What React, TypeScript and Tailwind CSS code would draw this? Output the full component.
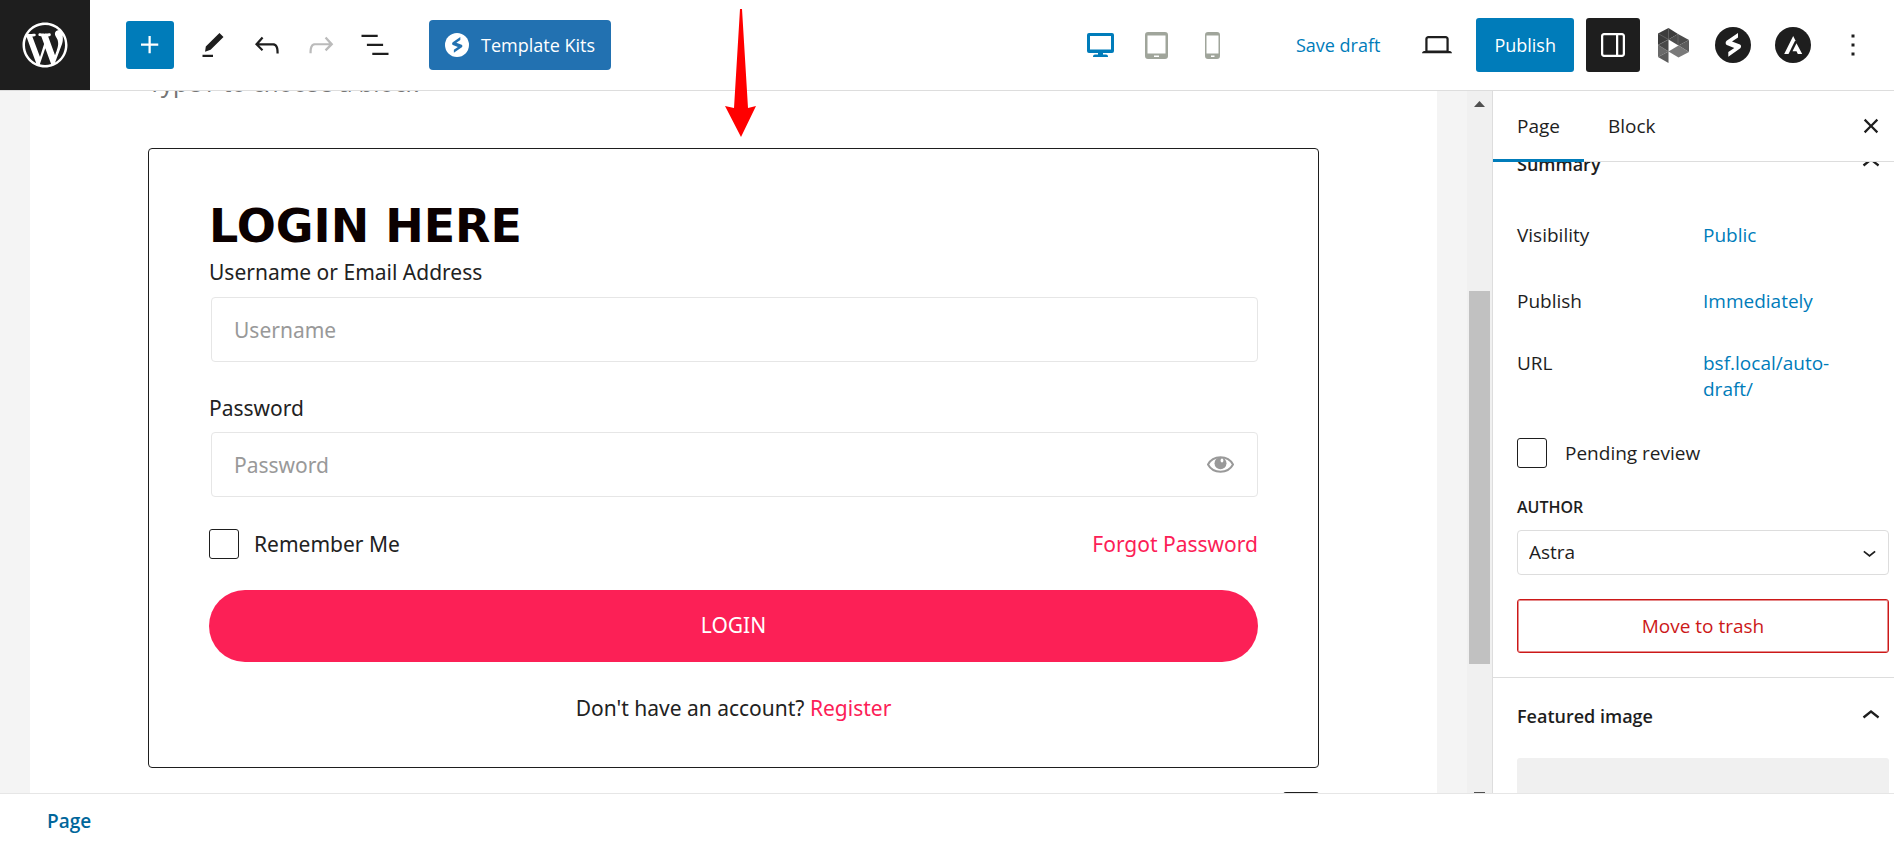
import { useState } from 'react';
import type { ReactNode } from 'react';

interface IconProps {
  d: string;
  className?: string;
}

function Icon({ d, className = 'size-9' }: IconProps) {
  return (
    <svg viewBox="0 0 24 24" fill="currentColor" className={`${className} shrink-0`} aria-hidden="true">
      <path d={d} />
    </svg>
  );
}

const icons = {
  plus: 'M11 12.5V17.5H12.5V12.5H17.5V11H12.5V6H11V11H6V12.5H11Z',
  pencil: 'M16.300 4 19 6.700 10.400 15.200 6.700 16.500 7.200 13zM5 18.500h7V20H5z',
  undo: 'M18.3 11.7c-.6-.6-1.4-.9-2.3-.9H6.7l2.9-3.3-1.1-1-4.5 5L8.5 16l1-1-2.7-2.7H16c.5 0 .9.2 1.3.5 1 1 1 3.4 1 4.5v.3h1.5v-.2c0-1.5 0-4.3-1.5-5.7z',
  redo: 'M15.6 6.5l-1.1 1 2.9 3.3H8c-.9 0-1.7.3-2.3.9-1.4 1.5-1.4 4.2-1.4 5.6v.2h1.5v-.3c0-1.1 0-3.5 1-4.5.3-.3.7-.5 1.3-.5h9.2L14.5 15l1.1 1.1 4.6-4.6-4.6-5z',
  list: 'M13.8 5.2H3v1.5h10.8V5.2zm-3.6 12v1.5H21v-1.5H10.2zm7.2-6H6.6v1.5h10.8v-1.5z',
  laptop: 'M20.5 16h-.7V8c0-1.1-.9-2-2-2H6.2c-1.1 0-2 .9-2 2v8h-.7c-.8 0-1.5.7-1.5 1.5h20c0-.8-.7-1.5-1.5-1.5zM5.7 8c0-.3.2-.5.5-.5h11.6c.3 0 .5.2.5.5v7.6H5.7V8z',
  drawer: 'M18 4H6c-1.1 0-2 .9-2 2v12c0 1.1.9 2 2 2h12c1.1 0 2-.9 2-2V6c0-1.1-.9-2-2-2zm-4 14.5H6c-.3 0-.5-.2-.5-.5V6c0-.3.2-.5.5-.5h8v13zm4.5-.5c0 .3-.2.5-.5.5h-2.5v-13H18c.3 0 .5.2.5.5v12z',
  more: 'M13 19h-2v-2h2v2zm0-6h-2v-2h2v2zm0-6h-2V5h2v2z',
  close: 'M12 13.06l3.712 3.713 1.061-1.06L13.061 12l3.712-3.712-1.06-1.06L12 10.938 8.288 7.227l-1.061 1.06L10.939 12l-3.712 3.712 1.06 1.061L12 13.061z',
  chevronUp: 'M6.5 12.4L12 8l5.5 4.4-.9 1.2L12 10l-4.5 3.6-1-1.2z',
  chevronDown: 'M17.5 11.6L12 16l-5.5-4.4.9-1.2L12 14l4.5-3.6 1 1.2z',
};

function WordPressLogo() {
  return (
    <svg viewBox="-2 -2 24 24" fill="currentColor" className="size-[54px]" aria-hidden="true">
      <path d="M20 10c0-5.51-4.49-10-10-10C4.48 0 0 4.49 0 10c0 5.52 4.48 10 10 10 5.51 0 10-4.48 10-10zM7.78 15.37L4.37 6.22c.55-.02 1.17-.08 1.17-.08.5-.06.44-1.13-.06-1.11 0 0-1.45.11-2.37.11-.18 0-.37 0-.58-.01C4.12 2.69 6.87 1.11 10 1.11c2.33 0 4.45.87 6.05 2.34-.68-.11-1.65.39-1.65 1.58 0 .74.45 1.36.9 2.1.35.61.55 1.36.55 2.46 0 1.49-1.4 5-1.4 5l-3.03-8.37c.54-.02.82-.17.82-.17.5-.05.44-1.25-.06-1.22 0 0-1.44.12-2.38.12-.87 0-2.33-.12-2.33-.12-.5-.03-.56 1.2-.06 1.22l.92.08 1.26 3.41zM17.41 10c.24-.64.74-1.87.43-4.25.7 1.29 1.05 2.71 1.05 4.25 0 3.29-1.73 6.24-4.4 7.78.97-2.59 1.94-5.2 2.92-7.78zM6.1 18.09C3.12 16.65 1.11 13.53 1.11 10c0-1.3.23-2.48.72-3.59C3.25 10.3 4.67 14.2 6.1 18.09zm4.03-6.63l2.58 6.98c-.86.29-1.76.45-2.71.45-.79 0-1.57-.11-2.29-.33.81-2.38 1.62-4.74 2.42-7.1z" />
    </svg>
  );
}

function SpectraLogo({ className, mark }: { className: string; mark: string }) {
  return (
    <svg viewBox="0 0 36 36" className={className} aria-hidden="true">
      <circle cx="18" cy="18" r="18" fill="currentColor" />
      <path
        className={mark}
        d="M23 6v4.500l-6 4 8 3c1.400.8 1.400 2.700.3 3.700l-12 8.600V25l6-4-7.500-3c-1.500-.8-1.500-3-.2-4.200z"
      />
    </svg>
  );
}

function AstraLogo() {
  return (
    <svg viewBox="0 0 36 36" className="size-9" aria-hidden="true">
      <circle cx="18" cy="18" r="18" fill="#1e1e1e" />
      <path fill="#fff" d="M18.200 9 20.300 13.300 13.500 27H9.200z" />
      <path fill="#fff" d="M21.500 16.200 27.200 27h-4.400l-1.300-2.700h-4z" />
    </svg>
  );
}

function PrestoLogo() {
  return (
    <svg viewBox="0 0 31 35" className="h-[35px] w-[31px]" aria-hidden="true">
      <path fill="#3c3c3c" d="M0 5.5 10.5 0 20 6 10.5 11.5 0 17z" />
      <path fill="#4c4c4c" d="M20 6 31 12 20.5 17.5 10.5 11.5z" />
      <path fill="#5c5c5c" d="M31 12v12L20.5 17.5z" />
      <path fill="#7a7a7a" d="M20.5 17.5 31 24 20.5 29.5 10.5 23.5z" />
      <path fill="#484848" d="M0 17 10.5 11.5v12z" />
      <path fill="#6a6a6a" d="M0 17 10.5 23.5 0 29z" />
      <path fill="#5c5c5c" d="M0 29 10.5 23.5V35z" />
      <path stroke="#777" strokeWidth=".6" fill="none" d="M0 5.5 10.5 11.5M10.5 0v11.5M0 17l10.5-5.5M20 6v11M0 17l10.5 6.5" />
    </svg>
  );
}

function DesktopIcon() {
  return (
    <svg viewBox="0 0 27 24" className="h-6 w-[27px]" fill="currentColor" aria-hidden="true">
      <path fillRule="evenodd" d="M2 0h23a2 2 0 0 1 2 2v16a2 2 0 0 1-2 2h-9v1.500h3a2 2 0 0 1 2 2v.5H6v-.5a2 2 0 0 1 2-2h3V20H2a2 2 0 0 1-2-2V2a2 2 0 0 1 2-2zm1 3v13.500h21V3z" />
    </svg>
  );
}

function TabletIcon() {
  return (
    <svg viewBox="0 0 23 27" className="h-[27px] w-[23px]" fill="currentColor" aria-hidden="true">
      <path fillRule="evenodd" d="M3 0h17a3 3 0 0 1 3 3v21a3 3 0 0 1-3 3H3a3 3 0 0 1-3-3V3a3 3 0 0 1 3-3zm-.5 3.500v18h18v-18zM9 23.500v1.500h5v-1.500z" />
    </svg>
  );
}

function PhoneIcon() {
  return (
    <svg viewBox="0 0 15 27" className="h-[27px] w-[15px]" fill="currentColor" aria-hidden="true">
      <path fillRule="evenodd" d="M3 0h9a3 3 0 0 1 3 3v21a3 3 0 0 1-3 3H3a3 3 0 0 1-3-3V3a3 3 0 0 1 3-3zM1.500 3.500v18h12v-18zM6 23.500v1.500h3.500v-1.500z" />
    </svg>
  );
}

function EyeIcon() {
  return (
    <svg viewBox="0 0 27 17" className="h-[17px] w-[27px]" aria-hidden="true">
      <path fill="none" stroke="#999" strokeWidth="2" d="M1 8.500C6-1.200 21-1.200 26 8.500 21 18 6 18 1 8.500z" />
      <circle cx="13.500" cy="7.300" r="6" fill="#999" />
      <ellipse cx="15" cy="4.500" rx="1.400" ry="1.900" fill="#fff" />
    </svg>
  );
}

function ToolButton({ label, d, className = 'text-[#1e1e1e]' }: { label: string; d: string; className?: string }) {
  return (
    <button type="button" aria-label={label} className={`flex size-12 items-center justify-center ${className}`}>
      <Icon d={d} />
    </button>
  );
}

function PanelButton({ label, children, active = false }: { label: string; children: ReactNode; active?: boolean }) {
  return (
    <button
      type="button"
      aria-label={label}
      className={`flex size-[54px] items-center justify-center rounded-[3px] ${active ? 'bg-[#1e1e1e] text-white' : 'text-[#1e1e1e]'}`}
    >
      {children}
    </button>
  );
}

function Header() {
  return (
    <header className="flex h-[91px] shrink-0 items-center justify-between border-b border-[#ddd] bg-white pr-[14px] text-[18px]">
      <div className="flex items-center">
        <a href="#dashboard" aria-label="View pages" className="mr-9 flex size-[90px] items-center justify-center bg-[#1e1e1e] text-white">
          <WordPressLogo />
        </a>
        <button type="button" aria-label="Add block" className="mr-[15px] flex size-12 items-center justify-center rounded-[3px] bg-[#007cba] text-white">
          <Icon d={icons.plus} />
        </button>
        <div className="flex gap-1.5">
          <ToolButton label="Tools" d={icons.pencil} />
          <ToolButton label="Undo" d={icons.undo} />
          <ToolButton label="Redo" d={icons.redo} className="text-[#bbb]" />
          <ToolButton label="List view" d={icons.list} />
        </div>
        <button type="button" className="ml-[30px] flex h-[50px] items-center gap-3 rounded-[4px] bg-[#2271b1] px-4 text-white">
          <SpectraLogo className="size-6 text-white" mark="fill-[#2271b1]" />
          Template Kits
        </button>
      </div>
      <div className="flex items-center gap-3">
        <div className="mr-[43px] flex items-center">
          <button type="button" aria-label="Desktop" className="flex h-12 w-14 items-center justify-center text-[#007cba]">
            <DesktopIcon />
          </button>
          <button type="button" aria-label="Tablet" className="flex h-12 w-14 items-center justify-center text-[#a0a59b]">
            <TabletIcon />
          </button>
          <button type="button" aria-label="Mobile" className="flex h-12 w-14 items-center justify-center text-[#a0a59b]">
            <PhoneIcon />
          </button>
        </div>
        <button type="button" className="pr-[18px] text-[#007cba]">Save draft</button>
        <PanelButton label="Preview">
          <Icon d={icons.laptop} />
        </PanelButton>
        <button type="button" className="h-[54px] rounded-[3px] bg-[#007cba] px-[18px] text-white">Publish</button>
        <div className="flex gap-1.5">
          <PanelButton label="Settings" active>
            <Icon d={icons.drawer} />
          </PanelButton>
          <PanelButton label="Presto Player">
            <PrestoLogo />
          </PanelButton>
          <PanelButton label="Spectra">
            <SpectraLogo className="size-9 text-[#1e1e1e]" mark="fill-white" />
          </PanelButton>
          <PanelButton label="Astra settings">
            <AstraLogo />
          </PanelButton>
          <PanelButton label="Options">
            <Icon d={icons.more} />
          </PanelButton>
        </div>
      </div>
    </header>
  );
}

function LoginForm() {
  const [remember, setRemember] = useState(false);
  const field =
    'h-[65px] w-full rounded-[4px] border border-[#e6e6e6] bg-white px-[22px] text-[21px] text-[#333] outline-none placeholder:text-[#999]';

  return (
    <form className="flex flex-col rounded-[4px] border border-[#1e1e1e] px-[60px] pt-12 pb-[43px]" onSubmit={(e) => e.preventDefault()}>
      <h2 className="font-['DejaVu_Sans',sans-serif] text-[46px] leading-[59px] font-bold text-[#0b0000]">LOGIN HERE</h2>
      <label htmlFor="username" className="leading-8">Username or Email Address</label>
      <div className="mt-[9px] pl-0.5">
        <input id="username" type="text" placeholder="Username" className={field} />
      </div>
      <label htmlFor="password" className="mt-[30px] leading-8">Password</label>
      <div className="relative mt-2 pl-0.5">
        <input id="password" type="password" placeholder="Password" className={field} />
        <button type="button" aria-label="Show password" className="absolute inset-y-0 right-6 flex items-center">
          <EyeIcon />
        </button>
      </div>
      <div className="mt-8 flex items-center justify-between leading-[30px]">
        <label className="flex items-center gap-[15px]">
          <input
            type="checkbox"
            checked={remember}
            onChange={(e) => setRemember(e.target.checked)}
            className="size-[30px] appearance-none rounded-[3px] border border-[#1e1e1e] bg-white checked:bg-[#1e1e1e]"
          />
          Remember Me
        </label>
        <a href="#forgot" className="text-[#fc2056]">Forgot Password</a>
      </div>
      <button type="submit" className="mt-[31px] h-[72px] rounded-full bg-[#fc2056] text-white">LOGIN</button>
      <p className="mt-[30px] text-center leading-8">
        Don&apos;t have an account? <a href="#register" className="text-[#fc2056]">Register</a>
      </p>
    </form>
  );
}

function Canvas() {
  return (
    <main className="flex min-w-0 flex-1 bg-[#f4f4f4] pl-[30px]">
      <div className="min-w-0 flex-1 overflow-hidden bg-white px-[118px] font-['Noto_Sans',sans-serif] text-[21px] text-[#222]">
        <p className="-mt-6 mb-[49px] text-[24px] leading-8 text-[#757575]">Type / to choose a block</p>
        <LoginForm />
        <div className="mt-6 flex justify-end">
          <button type="button" aria-label="Add block" className="flex size-9 items-center justify-center rounded-[3px] bg-[#1e1e1e] text-white">
            <Icon d={icons.plus} />
          </button>
        </div>
      </div>
      <div className="flex w-[55px] justify-end">
        <div className="flex w-[25px] flex-col items-center bg-[#f0f0f0] pt-2.5">
          <svg viewBox="0 0 11 6" className="h-1.5 w-[11px]" aria-hidden="true">
            <path fill="#505050" d="M5.500 0 11 6H0z" />
          </svg>
          <div className="mt-[184px] h-[373px] w-[21px] bg-[#c1c1c1]" />
          <div className="mt-auto h-px w-[11px] bg-[#505050]" />
        </div>
      </div>
    </main>
  );
}

function SummaryRow({ label, children }: { label: string; children: ReactNode }) {
  return (
    <div className="flex items-start">
      <span className="w-1/2">{label}</span>
      <a href="#edit" className="w-[140px] text-[#007cba]">{children}</a>
    </div>
  );
}

function Sidebar() {
  const [tab, setTab] = useState('Page');

  return (
    <aside className="flex w-[402px] shrink-0 flex-col border-l border-[#ddd] bg-white text-[#1e1e1e]">
      <div className="flex h-[71px] shrink-0 items-center border-b border-[#ddd]">
        {['Page', 'Block'].map((name) => (
          <button
            key={name}
            type="button"
            onClick={() => setTab(name)}
            className={`-mb-px h-[71px] border-b-3 px-6 pt-0.5 font-medium ${tab === name ? 'border-[#007cba]' : 'border-transparent'}`}
          >
            {name}
          </button>
        ))}
        <button type="button" aria-label="Close settings" className="mr-[5px] ml-auto">
          <Icon d={icons.close} />
        </button>
      </div>

      <div className="min-h-0 flex-1 overflow-hidden">
        <section className="border-b border-[#ddd] pr-[5px] pb-6 pl-6">
          <div className="-mt-4 flex items-center justify-between text-[18px] font-semibold">
            <h2 className="leading-[26px]">Summary</h2>
            <button type="button" aria-label="Collapse summary">
              <Icon d={icons.chevronUp} />
            </button>
          </div>
          <div className="mt-10 flex flex-col leading-[26px]">
            <SummaryRow label="Visibility">Public</SummaryRow>
            <div className="mt-10">
              <SummaryRow label="Publish">Immediately</SummaryRow>
            </div>
            <div className="mt-9">
              <SummaryRow label="URL">bsf.local/auto-draft/</SummaryRow>
            </div>
          </div>
          <label className="mt-9 flex items-center gap-[18px]">
            <input type="checkbox" className="size-[30px] appearance-none rounded-[3px] border border-[#1e1e1e] checked:bg-[#1e1e1e]" />
            Pending review
          </label>
          <label htmlFor="author" className="mt-[27px] block text-[16px] leading-6 font-semibold">AUTHOR</label>
          <div className="relative mt-[11px]">
            <select id="author" className="h-[45px] w-full appearance-none rounded-[4px] border border-[#ddd] bg-white pl-[11px]">
              <option>Astra</option>
            </select>
            <span className="pointer-events-none absolute inset-y-0 right-[6px] flex items-center">
              <Icon d={icons.chevronDown} className="size-[27px]" />
            </span>
          </div>
          <button
            type="button"
            className="mt-6 h-[54px] w-full rounded-[3px] border border-[#cc1818] text-[#cc1818] ring-1 ring-[#cc1818]/50 ring-inset"
          >
            Move to trash
          </button>
        </section>
        <section className="pr-[5px] pl-6">
          <div className="mt-5 flex items-center justify-between text-[18px] font-semibold">
            <h2>Featured image</h2>
            <button type="button" aria-label="Collapse featured image">
              <Icon d={icons.chevronUp} />
            </button>
          </div>
          <button type="button" aria-label="Set featured image" className="mt-6 h-[120px] w-full rounded-[3px] bg-[#f0f0f0]" />
        </section>
      </div>
    </aside>
  );
}

export default function App() {
  return (
    <div className="relative flex h-screen flex-col overflow-hidden bg-white font-['Open_Sans',sans-serif] text-[19px]">
      <Header />
      <div className="flex min-h-0 flex-1">
        <Canvas />
        <Sidebar />
      </div>
      <footer className="flex h-[52px] shrink-0 items-center border-t border-[#e6e6e6] pt-1 pl-[47px] font-semibold text-[#00669b]">
        <a href="#page">Page</a>
      </footer>

      {/* callout arrow above the login block */}
      <svg viewBox="0 0 32 128" className="pointer-events-none absolute top-[9px] left-[725px] h-32 w-8" aria-hidden="true">
        <path fill="#f00" d="M15 0h2l6 99 8-2-15 31L0 97l9 2z" />
      </svg>
    </div>
  );
}
